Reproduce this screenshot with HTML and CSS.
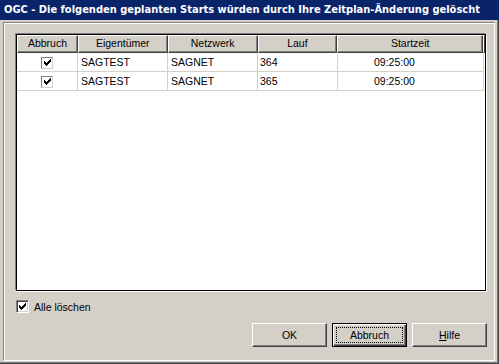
FILE: index.html
```html
<!DOCTYPE html>
<html>
<head>
<meta charset="utf-8">
<link rel="stylesheet" href="styles.css">
</head>
<body>
<div class="window">
  <div class="titlebar">OGC - Die folgenden geplanten Starts würden durch Ihre Zeitplan-Änderung gelöscht</div>
  <div class="frame">
    <div class="listbox">
      <div class="row head">
        <div class="hc c1">Abbruch</div>
        <div class="hc c2">Eigentümer</div>
        <div class="hc c3">Netzwerk</div>
        <div class="hc c4">Lauf</div>
        <div class="hc c5">Startzeit</div>
        <div class="hc filler"></div>
      </div>
      <div class="row item">
        <div class="cell c1 center"><span class="gchk"><svg width="7" height="7" viewBox="0 0 7 7"><path d="M0 2h1v1h1v1h1V3h1V2h1V1h1V0h1v3h-1v1h-1v1h-1v1h-1v1h-1V6h-1V5H0z" fill="#000"/></svg></span></div>
        <div class="cell c2">SAGTEST</div>
        <div class="cell c3">SAGNET</div>
        <div class="cell c4 lauf">364</div>
        <div class="cell c5 time">09:25:00</div>
      </div>
      <div class="row item">
        <div class="cell c1 center"><span class="gchk"><svg width="7" height="7" viewBox="0 0 7 7"><path d="M0 2h1v1h1v1h1V3h1V2h1V1h1V0h1v3h-1v1h-1v1h-1v1h-1v1h-1V6h-1V5H0z" fill="#000"/></svg></span></div>
        <div class="cell c2">SAGTEST</div>
        <div class="cell c3">SAGNET</div>
        <div class="cell c4 lauf">365</div>
        <div class="cell c5 time">09:25:00</div>
      </div>
    </div>
    <label class="check-row">
      <span class="chk"><svg width="7" height="7" viewBox="0 0 7 7"><path d="M0 2h1v1h1v1h1V3h1V2h1V1h1V0h1v3h-1v1h-1v1h-1v1h-1v1h-1V6h-1V5H0z" fill="#000"/></svg></span>
      <span>Alle löschen</span>
    </label>
    <div class="buttons">
      <div class="btn">OK</div>
      <div class="btn default"><span class="focus">Abbruch</span></div>
      <div class="btn"><span><u>H</u>ilfe</span></div>
    </div>
  </div>
</div>
</body>
</html>
```

FILE: styles.css
```css
html, body {
  margin: 0;
  padding: 0;
}
body {
  width: 499px;
  height: 364px;
  overflow: hidden;
  background: #d4d0c8;
  font-family: "Liberation Sans", Arial, sans-serif;
  font-size: 10.5px;
  color: #000;
}
.window {
  width: 499px;
  height: 364px;
  box-sizing: border-box;
  display: flex;
  flex-direction: column;
  box-shadow: inset -1px -1px 0 #404040, inset -2px -2px 0 #808080;
}
.titlebar {
  height: 20px;
  line-height: 20px;
  background: #0a246a;
  color: #fff;
  font-weight: bold;
  font-size: 11px;
  font-family: "DejaVu Sans Condensed", "DejaVu Sans", sans-serif;
  padding-left: 4px;
  white-space: nowrap;
  overflow: hidden;
  letter-spacing: 0;
}
.frame {
  margin: 2px 4px 0 3px;
  height: 339px;
  box-sizing: border-box;
  border-left: 1px solid #808080;
  border-top: 1px solid #808080;
  border-right: 1px solid #fff;
  border-bottom: 1px solid #fff;
  box-shadow: inset 1px 1px 0 #fff;
  display: flex;
  flex-direction: column;
}
.listbox {
  margin: 11px 8px 0 12px;
  height: 257px;
  box-sizing: border-box;
  border: 1px solid #000;
  background: #fff;
  box-shadow: -1px -1px 0 #808080, 1px 1px 0 #fff;
  overflow: hidden;
}
.row {
  display: flex;
}
.head {
  height: 18px;
}
.hc {
  box-sizing: border-box;
  height: 18px;
  line-height: 15px;
  text-align: center;
  background: #d4d0c8;
  border-top: 1px solid #fff;
  border-left: 1px solid #fff;
  border-right: 1px solid #404040;
  border-bottom: 1px solid #404040;
  box-shadow: inset -1px -1px 0 #808080;
}
.c1 { width: 61px; }
.c2 { width: 90px; }
.c3 { width: 90px; }
.c4 { width: 80px; }
.c5 { width: 146px; }
.filler { flex: 1; }
.item {
  height: 19px;
}
.cell {
  box-sizing: border-box;
  height: 19px;
  line-height: 18px;
  border-right: 1px solid #d4d0c8;
  border-bottom: 1px solid #d4d0c8;
  padding-left: 3px;
  white-space: nowrap;
}
.center {
  display: flex;
  align-items: center;
  justify-content: center;
  padding-left: 0;
  padding-top: 1px;
}
.lauf { padding-left: 2px; }
.time { padding-left: 36px; }
.gchk {
  width: 12px;
  height: 12px;
  box-sizing: border-box;
  border-top: 1px solid #808080;
  border-left: 1px solid #808080;
  border-right: 1px solid #d4d0c8;
  border-bottom: 1px solid #d4d0c8;
  background: #fff;
  display: flex;
  align-items: center;
  justify-content: center;
}
.check-row {
  display: flex;
  align-items: center;
  margin: 9px 0 0 12px;
  height: 13px;
  gap: 5px;
}
.chk {
  width: 13px;
  height: 13px;
  box-sizing: border-box;
  border-top: 1px solid #808080;
  border-left: 1px solid #808080;
  border-right: 1px solid #fff;
  border-bottom: 1px solid #fff;
  box-shadow: inset 1px 1px 0 #404040, inset -1px -1px 0 #d4d0c8;
  background: #fff;
  display: flex;
  align-items: center;
  justify-content: center;
}
.buttons {
  display: flex;
  justify-content: flex-end;
  gap: 5px;
  margin: 10px 7px 0 0;
}
.btn {
  width: 75px;
  height: 24px;
  box-sizing: border-box;
  border-top: 1px solid #fff;
  border-left: 1px solid #fff;
  border-right: 1px solid #404040;
  border-bottom: 1px solid #404040;
  box-shadow: inset -1px -1px 0 #808080;
  display: flex;
  align-items: center;
  justify-content: center;
  background: #d4d0c8;
}
.btn.default {
  border: 1px solid #000;
  box-shadow: inset 1px 1px 0 #fff, inset -1px -1px 0 #404040, inset -2px -2px 0 #808080;
}
.focus {
  display: flex;
  align-items: center;
  justify-content: center;
  width: 67px;
  height: 16px;
  box-sizing: border-box;
  border: 1px dotted #000;
}
```
